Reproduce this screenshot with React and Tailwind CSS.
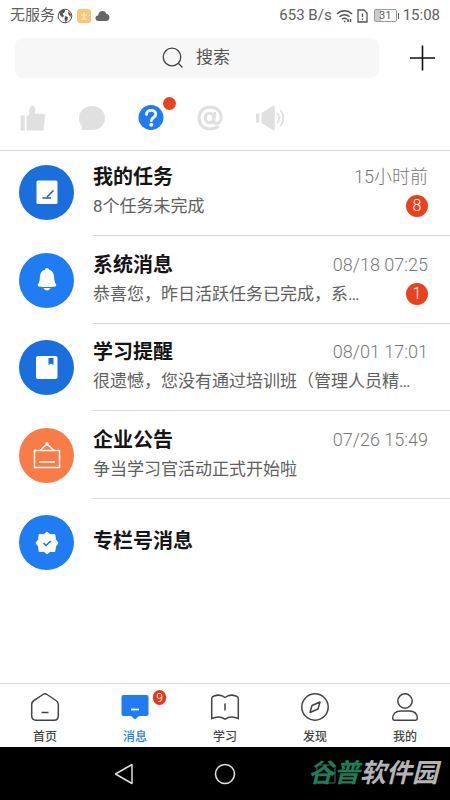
import { useState } from 'react'
import clsx from 'clsx'

const MESSAGES = [
  { key: 'task', title: '我的任务', text: '8个任务未完成', time: '15小时前', count: 8, color: 'bg-[#1a6fdc]', icon: TaskIcon },
  { key: 'system', title: '系统消息', text: '恭喜您，昨日活跃任务已完成，系…', time: '08/18 07:25', count: 1, color: 'bg-[#1f7cf2]', icon: BellIcon },
  { key: 'study', title: '学习提醒', text: '很遗憾，您没有通过培训班（管理人员精…', time: '08/01 17:01', color: 'bg-[#1a6fdc]', icon: BookmarkIcon },
  { key: 'notice', title: '企业公告', text: '争当学习官活动正式开始啦', time: '07/26 15:49', color: 'bg-[#f97c48]', icon: BoardIcon },
  { key: 'column', title: '专栏号消息', color: 'bg-[#1f7cf2]', icon: VerifiedIcon },
]

const FILTERS = [
  { key: 'like', label: '点赞', icon: ThumbIcon },
  { key: 'comment', label: '评论', icon: ChatIcon },
  { key: 'question', label: '问答', icon: QuestionIcon, dot: true },
  { key: 'mention', label: '提到我的', icon: AtIcon },
  { key: 'broadcast', label: '广播', icon: SpeakerIcon },
]

const TABS = [
  { key: 'home', label: '首页', icon: HomeIcon },
  { key: 'message', label: '消息', icon: MessageIcon, count: 9 },
  { key: 'learn', label: '学习', icon: BookIcon },
  { key: 'discover', label: '发现', icon: CompassIcon },
  { key: 'mine', label: '我的', icon: UserIcon },
]

function TaskIcon() {
  return (
    <svg width="28" height="28" viewBox="0 0 28 28">
      <rect x="3.500" y="1.500" width="21" height="23.500" rx="1.500" fill="#fff" />
      <path d="M9.500 19h8.500M14 18l6.500-6.500" fill="none" stroke="#1a5fb8" strokeWidth="1.500" />
    </svg>
  )
}

function BellIcon() {
  return (
    <svg width="28" height="28" viewBox="0 0 28 28" fill="#fff">
      <path d="M14 2c1.200 0 1.900.8 2.100 1.800 3.500 1 4.800 3.900 5 7.200.2 4 .7 5.500 1.900 7.200.6.900.2 2-1 2.200-5.200.9-10.800.9-16 0-1.200-.2-1.600-1.300-1-2.200 1.200-1.700 1.700-3.200 1.900-7.200.2-3.300 1.500-6.200 5-7.200C12.100 2.800 12.800 2 14 2z" />
      <path d="M10.500 22h7c-.6 1.600-1.900 2.400-3.500 2.400s-2.900-.8-3.500-2.400z" />
    </svg>
  )
}

function BookmarkIcon() {
  return (
    <svg width="28" height="28" viewBox="0 0 28 28">
      <rect x="3" y="2" width="21.500" height="23" rx="2" fill="#fff" />
      <path d="M15.500 4h5v7L18 9.500 15.500 11z" fill="#1a6fdc" />
    </svg>
  )
}

function BoardIcon() {
  return (
    <svg width="30" height="30" viewBox="0 0 30 30" fill="none" stroke="#fff" strokeWidth="1.500">
      <path d="M2.500 10.500h25v17h-25zM7 22h16M8.500 10L14 5h2l5.500 5" />
      <circle cx="15" cy="4" r="1" />
    </svg>
  )
}

function VerifiedIcon() {
  return (
    <svg width="28" height="28" viewBox="0 0 28 28">
      <path d="M14 3l3 2.600 4.800-.1.600 4.800L25 14l-2.600 3.700-.6 4.800-4.800-.1L14 25l-3-2.600-4.800.1-.6-4.800L3 14l2.600-3.700.6-4.800 4.800.1z" fill="#fff" stroke="#fff" strokeWidth="1" strokeLinejoin="round" />
      <path d="M10.500 14l2.500 2.500 4.800-4.500" fill="none" stroke="#1f6fd8" strokeWidth="1.500" />
    </svg>
  )
}

function ThumbIcon() {
  return (
    <svg width="26" height="26" viewBox="0 0 26 26" fill="currentColor">
      <path d="M.5 10.500h4.300V25.500H.5z" />
      <path d="M6.500 11.500c1.300-.3 2.400-1.300 2.700-3.200.2-1.500-.2-3.700.8-5.600C10.700 1.200 11.700.6 12.700.7c1.800.2 2.700 1.800 2.600 3.700-.1 1.600-.5 2.900-.5 4.400h8.600c1 0 1.700.8 1.600 1.800l-1.300 13.300c-.1 1-.9 1.600-1.800 1.600H6.500z" />
    </svg>
  )
}

function ChatIcon() {
  return (
    <svg width="26" height="26" viewBox="0 0 26 26" fill="currentColor">
      <path d="M13 1c7.200 0 13 5.100 13 12.200C26 20.500 20.200 25 13 25H3c-.8 0-1-.6-.6-1.200L3.500 22C1.200 19.800 0 16.800 0 13.200 0 6.100 5.800 1 13 1z" />
    </svg>
  )
}

function QuestionIcon() {
  return (
    <svg width="26" height="26" viewBox="0 0 26 26">
      <circle cx="13" cy="12.500" r="12.500" fill="#1f7cf2" />
      <path d="M8.500 9.400c0-2.500 2-4.100 4.700-4.100s4.600 1.600 4.600 3.900c0 3.300-4.500 3.300-4.500 6.500" fill="none" stroke="#fff" strokeWidth="2.800" strokeLinecap="round" />
      <circle cx="13.300" cy="19.700" r="2" fill="#fff" />
    </svg>
  )
}

function AtIcon() {
  return (
    <svg width="26" height="26" viewBox="0 0 26 26" fill="none" stroke="currentColor" strokeWidth="3" strokeLinecap="round">
      <ellipse cx="12.500" cy="13" rx="4.200" ry="4.800" />
      <path d="M17.800 8.200l-1 7.300c-.2 2 .8 2.900 2.400 2.900 2.700 0 4.900-2.500 4.900-5.900C24.100 6.300 19.500 2 13 2 6.500 2 2 6.600 2 13s4.500 11 11 11c3.200 0 5.800-.8 7.800-2.200" />
    </svg>
  )
}

function SpeakerIcon() {
  return (
    <svg width="30" height="26" viewBox="0 0 30 26" fill="currentColor">
      <path d="M0 8.500h3.400v9H0zM5.500 8L16.800 1c1.100-.7 2-.3 2 1v22c0 1.300-.9 1.700-2 1L5.500 18z" />
      <path d="M21.500 8.500c2 2.600 2 6.400 0 9M24.800 5.500c3.500 4.400 3.500 10.600 0 15" fill="none" stroke="currentColor" strokeWidth="1.800" strokeLinecap="round" />
    </svg>
  )
}

function HomeIcon() {
  return (
    <svg width="30" height="30" viewBox="0 0 30 30" fill="none" stroke="currentColor" strokeWidth="1.500">
      <path d="M13 2.500a3.500 3.500 0 0 1 4 0l9 6c1.700 1.100 2.300 2.200 2.300 4v11.200c0 2.800-1.500 4.500-4.300 4.500H6c-2.800 0-4.300-1.700-4.300-4.500V12.500c0-1.800.6-2.900 2.300-4z" />
      <path d="M11.500 20.500h7" />
    </svg>
  )
}

function MessageIcon() {
  return (
    <svg width="30" height="30" viewBox="0 0 30 30">
      <path d="M3.500 3h23A2 2 0 0 1 28.500 5v17a2 2 0 0 1-2 2H19l-4 3.500L11 24H3.500a2 2 0 0 1-2-2V5a2 2 0 0 1 2-2z" fill="#1f7cf2" />
      <path d="M11 17.500h8" stroke="#fff" strokeWidth="1.800" />
    </svg>
  )
}

function BookIcon() {
  return (
    <svg width="30" height="30" viewBox="0 0 30 30" fill="none" stroke="currentColor" strokeWidth="1.500">
      <path d="M15 5.500c-3-2.400-7.500-2.800-11-1.500-1.500.5-2.300 1.300-2.300 2.700v19.800c4.300-2 9.800-1.800 13.300.7 3.500-2.500 9-2.700 13.300-.7V6.700c0-1.400-.8-2.200-2.300-2.700-3.500-1.300-8-.9-11 1.500zM15 11.500v7" />
    </svg>
  )
}

function CompassIcon() {
  return (
    <svg width="30" height="30" viewBox="0 0 30 30" fill="none" stroke="currentColor" strokeWidth="1.500">
      <circle cx="15" cy="15" r="13.200" />
      <path d="M20 10l-2 7-8 3.500 2-7z" strokeLinejoin="round" />
    </svg>
  )
}

function UserIcon() {
  return (
    <svg width="30" height="30" viewBox="0 0 30 30" fill="none" stroke="currentColor" strokeWidth="1.500">
      <circle cx="15" cy="9" r="7.200" />
      <path d="M11 19h8c5.500 0 8.300 2.700 8.300 7.500 0 1-.6 1.700-1.600 1.700H4.300c-1 0-1.600-.7-1.600-1.700C2.700 21.700 5.500 19 11 19z" />
    </svg>
  )
}

function StatusBar() {
  return (
    <div className="flex h-[31px] items-center px-2.5 text-[15px] text-[#606060]">
      <span>无服务</span>
      <svg className="ml-0.5" width="16" height="16" viewBox="0 0 16 16">
        <circle cx="8" cy="8" r="6.800" fill="none" stroke="#555" strokeWidth="1" />
        <path d="M2 4l4-2.500 2.500 1L7 5 5.500 5.500 7 8l-1.500 1.500L3 7zM8 8l3 1-.5 3-2 2.500L7.500 11zM11 3l3 3-.5 3-2-2.500z" fill="#555" />
      </svg>
      <svg className="ml-1" width="14" height="14" viewBox="0 0 14 14">
        <rect width="14" height="14" rx="3" fill="#f8c777" />
        <path d="M7 3.500v7M4 6h6M4.500 10h5" stroke="#fff0d5" strokeWidth="1.200" />
      </svg>
      <svg className="ml-1" width="15" height="12" viewBox="0 0 15 12">
        <path d="M3.500 11C1.500 11 .5 9.700.5 8.200s1-2.500 2.600-2.700C3.300 3 5 1 7.500 1c2 0 3.400 1.100 3.900 3 1.900 0 3.100 1.400 3.100 3.300S13.200 11 11.500 11z" fill="#666" />
      </svg>
      <span className="ml-auto">653 B/s</span>
      <svg className="ml-1" width="17" height="14" viewBox="0 0 17 14" fill="none" stroke="#555" strokeWidth="1.500">
        <path d="M1 5c4.300-4.200 10.700-4.200 15 0M3.500 7.800c2.900-2.800 7.100-2.800 10 0M6 10.300c1.500-1.300 3.500-1.300 5 0" />
        <path d="M8 12.500h1.500M12 10v3M14.500 10v3" />
      </svg>
      <svg className="ml-1" width="11" height="14" viewBox="0 0 11 14" fill="none" stroke="#555" strokeWidth="1.300">
        <path d="M1 1h6l3 3v9H1zM5.500 4.500V8M5.500 9.500V11" />
      </svg>
      <div className="ml-1.5 flex items-center">
        <span className="flex h-[13px] w-[23px] items-center justify-center rounded-[2px] border border-[#999] bg-linear-to-r from-[#ccc] from-30% to-white to-30% text-[11px] leading-none">31</span>
        <span className="ml-px h-1.5 w-px bg-[#666]" />
      </div>
      <span className="ml-1">15:08</span>
    </div>
  )
}

function MessageRow({ item }) {
  const Icon = item.icon
  return (
    <li>
      <a href="#" className="flex h-full items-end gap-[19px] pl-[19px]">
        <span className={clsx('mb-4 flex size-[55px] shrink-0 items-center justify-center rounded-full', item.color)}>
          <Icon />
        </span>
        <div className={clsx('flex h-full min-w-0 flex-1 flex-col justify-end pr-[22px]', item.text ? 'border-b border-[#d9d9d9] pb-[15px]' : 'pb-[30px]')}>
          <div className="flex items-center justify-between leading-[30px]">
            <h2 className="text-[20px] font-bold text-[#151515]">{item.title}</h2>
            {item.time && <time className="text-[18px] font-light text-[#777]">{item.time}</time>}
          </div>
          {item.text && (
            <div className="flex items-center justify-between">
              <p className="whitespace-nowrap text-[17px] leading-7 text-[#606060]">{item.text}</p>
              {item.count && (
                <span className="flex size-[22px] shrink-0 items-center justify-center rounded-full bg-[#e8431f] text-[16px] font-light leading-none text-white">{item.count}</span>
              )}
            </div>
          )}
        </div>
      </a>
    </li>
  )
}

export default function App() {
  const [filter, setFilter] = useState('question')
  const [tab, setTab] = useState('message')

  return (
    <div className="flex min-h-screen flex-col bg-white font-[Roboto,'Noto_Sans_CJK_SC',sans-serif]">
      <StatusBar />

      <header className="mt-[7px] flex items-center pl-[15px] pr-[14px]">
        <label className="flex h-10 flex-1 items-center justify-center gap-3 rounded-lg bg-[#f7f7f7]">
          <svg width="22" height="22" viewBox="0 0 22 22" fill="none" stroke="#444" strokeWidth="1.300">
            <circle cx="10" cy="10" r="8.800" />
            <path d="M16 16l4.500 4.500" />
          </svg>
          <input type="text" aria-label="搜索" placeholder="搜索" className="w-9 bg-transparent text-[17px] text-[#555] outline-none placeholder:text-[#555]" />
        </label>
        <button aria-label="新建" className="ml-[31px]">
          <svg width="26" height="26" viewBox="0 0 26 26" stroke="#111" strokeWidth="1.600">
            <path d="M12.500 .5v25M0 13h25" />
          </svg>
        </button>
      </header>

      <div className="flex h-[73px] items-center gap-[33px] border-b border-[#d9d9d9] pl-5 pt-2">
        {FILTERS.map((f) => (
          <button key={f.key} aria-label={f.label} aria-pressed={filter === f.key} onClick={() => setFilter(f.key)} className="relative text-[#e0e0e0]">
            <f.icon />
            {f.dot && <span className="absolute -right-3 -top-2 size-[13px] rounded-full bg-[#e8431f]" />}
          </button>
        ))}
      </div>

      <ul className="grid h-[435px] grid-rows-[85px_repeat(4,1fr)]">
        {MESSAGES.map((m) => <MessageRow key={m.key} item={m} />)}
      </ul>

      <nav className="mt-auto grid h-16 grid-cols-5 border-t border-[#ddd]">
        {TABS.map((t) => (
          <button key={t.key} onClick={() => setTab(t.key)}
            className={clsx('flex flex-col items-center gap-1.5 pt-2 text-[12px] font-medium leading-[18px]', tab === t.key ? 'text-[#1f7cf2]' : 'text-[#444]')}>
            <span className="relative">
              <t.icon />
              {t.count && (
                <span className="absolute -right-4 -top-0.5 flex h-[15px] w-[13px] items-center justify-center rounded-full bg-[#e03a18] text-[12px] font-light leading-none text-white">{t.count}</span>
              )}
            </span>
            {t.label}
          </button>
        ))}
      </nav>

      <footer className="relative flex h-[53px] items-center justify-center gap-20 bg-black">
        <button aria-label="返回">
          <svg width="20" height="22" viewBox="0 0 20 22" fill="none" stroke="#ddd" strokeWidth="1.500" strokeLinejoin="round">
            <path d="M18 1.500v19L1.500 11z" />
          </svg>
        </button>
        <button aria-label="主屏幕">
          <svg width="22" height="22" viewBox="0 0 22 22" fill="none" stroke="#ddd" strokeWidth="1.600">
            <circle cx="11" cy="11" r="9.500" />
          </svg>
        </button>
        <button aria-label="最近任务">
          <svg width="20" height="20" viewBox="0 0 20 20" fill="none" stroke="#3f6f5f" strokeWidth="1">
            <rect x="1" y="1" width="18" height="18" rx="1" />
          </svg>
        </button>
        <span className="absolute right-3 top-2 text-[26px] font-bold italic leading-9 text-[#b4b4b4]">
          <span className="text-[#1c7d5a]">谷普</span>软件园
        </span>
      </footer>
    </div>
  )
}
